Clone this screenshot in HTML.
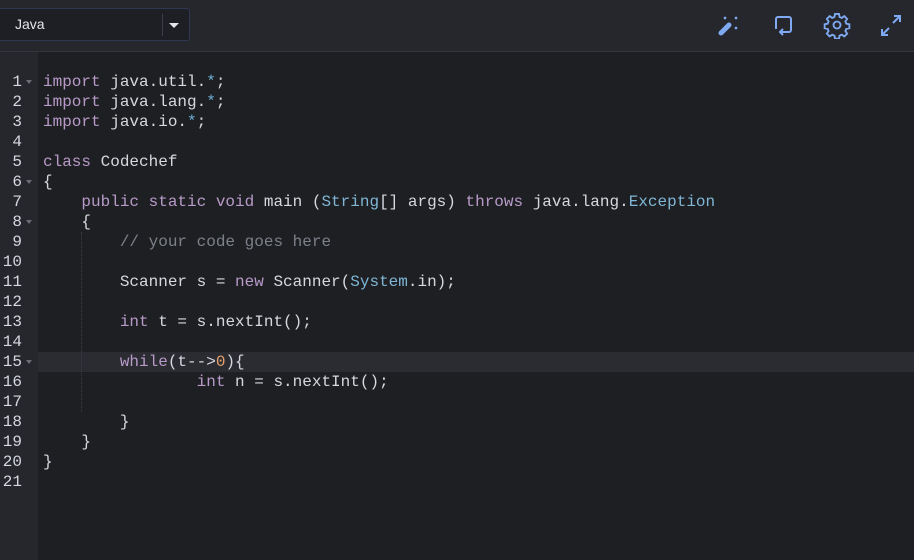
<!DOCTYPE html>
<html><head><style>
body{margin:0;width:914px;height:560px;overflow:hidden;background:#1e1f22;font-family:"Liberation Sans",sans-serif}
.hdr{position:absolute;left:0;top:0;width:914px;height:51px;background:#25272d;border-bottom:1px solid #33363d}
.sel{position:absolute;left:-2px;top:8px;width:190px;height:31px;border:1px solid #2f3850;border-radius:3px;background:#1d1f24;color:#e4e6ea;font-size:14px}
.sel span{position:absolute;left:16px;top:7px}
.sel .sep{position:absolute;left:163px;top:5px;width:1px;height:22px;background:#3a3f4b}
.sel .arr{position:absolute;left:170px;top:14px;width:0;height:0;border-left:5px solid transparent;border-right:5px solid transparent;border-top:5px solid #e4e6ea}
.gut{position:absolute;left:0;top:52px;width:38px;height:508px;background:#25272c}
.code{position:absolute;left:0;top:72px;font-family:"Liberation Mono",monospace;font-size:16px;line-height:20px;color:#d5d8de;white-space:pre}
.ln{position:absolute;left:0;width:22px;text-align:right;color:#d5d8de}
.fold{position:absolute;left:26px;width:0;height:0;border-left:3px solid transparent;border-right:3px solid transparent;border-top:4px solid #6a6d75}
.l{position:absolute;left:43px}
.k{color:#b89ac9}.b{color:#6fb3d8}.g{color:#7c818a}.o{color:#e8a070}.t{color:#7fb6d6}
.hl{position:absolute;left:38px;top:352px;width:876px;height:20px;background:#2a2c31}
.guide{position:absolute;left:81px;top:232px;height:180px;border-left:1px dotted #3a3d44}
</style></head><body>
<div class="hdr">
<div class="sel"><span>Java</span><div class="sep"></div><div class="arr"></div></div>
<svg style="position:absolute;left:716px;top:12px" width="26" height="26" viewBox="0 0 26 26" fill="none" stroke="#7fa9f0" stroke-width="2">
<path d="M5 21 L13 13" stroke-width="5" stroke-linecap="round"/><path d="M8 5l2 2M10 5l-2 2M19 5l2 2M21 5l-2 2M19 15l2 2M21 15l-2 2" stroke-width="1.3"/></svg>
<svg style="position:absolute;left:771px;top:12px" width="26" height="26" viewBox="0 0 26 26" fill="none" stroke="#7fa9f0" stroke-width="2">
<path d="M5 17V7a2 2 0 0 1 2-2h11a2 2 0 0 1 2 2v11a2 2 0 0 1-2 2h-8"/><path d="M12 17l-3 3 3 3"/></svg>
<svg style="position:absolute;left:823px;top:11px" width="28" height="28" viewBox="0 0 24 24" fill="none" stroke="#7fa9f0" stroke-width="1.6">
<circle cx="12" cy="12" r="3"/><path d="M10.3 2.5h3.4l.5 2.6 1.9.8 2.2-1.5 2.4 2.4-1.5 2.2.8 1.9 2.6.5v3.4l-2.6.5-.8 1.9 1.5 2.2-2.4 2.4-2.2-1.5-1.9.8-.5 2.6h-3.4l-.5-2.6-1.9-.8-2.2 1.5-2.4-2.4 1.5-2.2-.8-1.9-2.6-.5v-3.4l2.6-.5.8-1.9-1.5-2.2 2.4-2.4 2.2 1.5 1.9-.8z"/></svg>
<svg style="position:absolute;left:878px;top:13px" width="26" height="26" viewBox="0 0 26 26" fill="none" stroke="#7fa9f0" stroke-width="2">
<path d="M15 10l7-7M16 3h6v6M11 15l-7 7M4 16v6h6"/></svg>
</div>
<div class="gut"></div>
<div class="hl"></div>
<div class="guide"></div>
<div class="code">
<div class="ln" style="top:0">1</div><div class="fold" style="top:8px"></div><div class="l" style="top:0"><span class="k">import</span> java.util.<span class="b">*</span>;</div>
<div class="ln" style="top:20px">2</div><div class="l" style="top:20px"><span class="k">import</span> java.lang.<span class="b">*</span>;</div>
<div class="ln" style="top:40px">3</div><div class="l" style="top:40px"><span class="k">import</span> java.io.<span class="b">*</span>;</div>
<div class="ln" style="top:60px">4</div>
<div class="ln" style="top:80px">5</div><div class="l" style="top:80px"><span class="k">class</span> Codechef</div>
<div class="ln" style="top:100px">6</div><div class="fold" style="top:108px"></div><div class="l" style="top:100px">{</div>
<div class="ln" style="top:120px">7</div><div class="l" style="top:120px">    <span class="k">public static void</span> main (<span class="t">String</span>[] args) <span class="k">throws</span> java.lang.<span class="t">Exception</span></div>
<div class="ln" style="top:140px">8</div><div class="fold" style="top:148px"></div><div class="l" style="top:140px">    {</div>
<div class="ln" style="top:160px">9</div><div class="l" style="top:160px">        <span class="g">// your code goes here</span></div>
<div class="ln" style="top:180px">10</div>
<div class="ln" style="top:200px">11</div><div class="l" style="top:200px">        Scanner s = <span class="k">new</span> Scanner(<span class="t">System</span>.in);</div>
<div class="ln" style="top:220px">12</div>
<div class="ln" style="top:240px">13</div><div class="l" style="top:240px">        <span class="k">int</span> t = s.nextInt();</div>
<div class="ln" style="top:260px">14</div>
<div class="ln" style="top:280px">15</div><div class="fold" style="top:288px"></div><div class="l" style="top:280px">        <span class="k">while</span>(t--&gt;<span class="o">0</span>){</div>
<div class="ln" style="top:300px">16</div><div class="l" style="top:300px">                <span class="k">int</span> n = s.nextInt();</div>
<div class="ln" style="top:320px">17</div>
<div class="ln" style="top:340px">18</div><div class="l" style="top:340px">        }</div>
<div class="ln" style="top:360px">19</div><div class="l" style="top:360px">    }</div>
<div class="ln" style="top:380px">20</div><div class="l" style="top:380px">}</div>
<div class="ln" style="top:400px">21</div>
</div>
</body></html>
